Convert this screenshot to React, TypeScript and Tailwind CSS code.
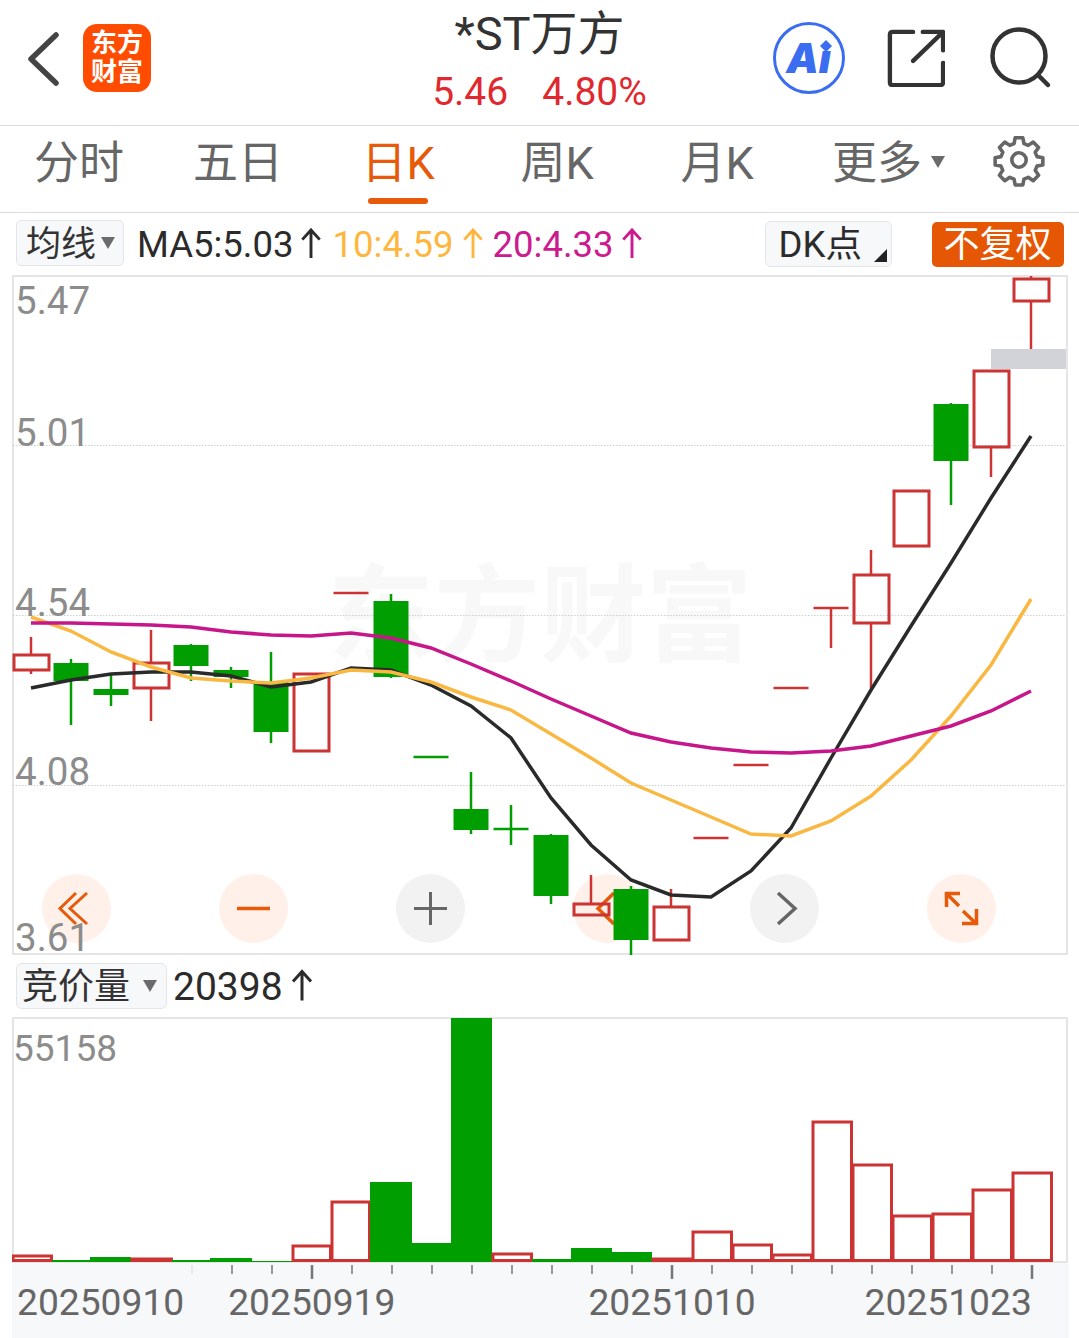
const RED = "#cc3333";
const GREEN = "#009e00";
const ORANGE = "#e65a0a";

type Candle = { x: number; c: "r" | "g"; top: number; bottom: number; hi?: number; lo?: number };

// page coordinates, read off the screenshot
const candles: Candle[] = [
  { x: 31, c: "r", top: 655, bottom: 670, hi: 637, lo: 674 },
  { x: 71, c: "g", top: 663, bottom: 681, hi: 659, lo: 725 },
  { x: 111, c: "g", top: 689, bottom: 695, hi: 675, lo: 706 },
  { x: 151, c: "r", top: 663, bottom: 688, hi: 630, lo: 721 },
  { x: 191, c: "g", top: 645, bottom: 666, hi: 644, lo: 681 },
  { x: 231, c: "g", top: 670, bottom: 677, hi: 667, lo: 688 },
  { x: 271, c: "g", top: 682, bottom: 732, hi: 652, lo: 743 },
  { x: 311, c: "r", top: 674, bottom: 751 },
  { x: 351, c: "r", top: 593, bottom: 593 },
  { x: 391, c: "g", top: 601, bottom: 677, hi: 594, lo: 678 },
  { x: 431, c: "g", top: 757, bottom: 757 },
  { x: 471, c: "g", top: 809, bottom: 830, hi: 772, lo: 834 },
  { x: 511, c: "g", top: 829, bottom: 829, hi: 805, lo: 845 },
  { x: 551, c: "g", top: 835, bottom: 896, hi: 834, lo: 904 },
  { x: 591, c: "r", top: 904, bottom: 915, hi: 875 },
  { x: 631, c: "g", top: 889, bottom: 940, hi: 886, lo: 955 },
  { x: 671, c: "r", top: 907, bottom: 940, hi: 889 },
  { x: 711, c: "r", top: 838, bottom: 838 },
  { x: 751, c: "r", top: 765, bottom: 765 },
  { x: 791, c: "r", top: 688, bottom: 688 },
  { x: 831, c: "r", top: 608, bottom: 608, lo: 648 },
  { x: 871, c: "r", top: 575, bottom: 623, hi: 550, lo: 688 },
  { x: 911, c: "r", top: 491, bottom: 546 },
  { x: 951, c: "g", top: 404, bottom: 461, hi: 403, lo: 505 },
  { x: 991, c: "r", top: 371, bottom: 447, lo: 477 },
  { x: 1031, c: "r", top: 279, bottom: 301, hi: 276, lo: 349 },
];

const ma5 = [688, 680, 674, 672, 672, 676, 687, 682, 668, 670, 685, 706, 738, 798, 845, 880, 895, 897, 871, 828, 758, 690, 626, 563, 498, 436];
const ma10 = [617, 631, 652, 667, 678, 681, 683, 678, 670, 672, 682, 697, 710, 734, 758, 783, 800, 817, 834, 836, 821, 796, 760, 716, 665, 599];
const ma20 = [623, 623, 624, 625, 627, 632, 635, 636, 633, 638, 648, 664, 681, 699, 716, 733, 742, 748, 752, 753, 751, 746, 736, 726, 711, 691];

const pts = (ys: number[]) => ys.map((y, i) => `${31 + i * 40},${y}`).join(" ");

const volumes: [number, number, "r" | "g", number][] = [
  [12, 52, "r", 1255], [52, 90, "g", 1260], [90, 131, "g", 1257], [131, 172, "r", 1258],
  [172, 210, "g", 1260], [210, 252, "g", 1258], [252, 292, "g", 1261], [292, 331, "r", 1245],
  [331, 370, "r", 1201], [370, 412, "g", 1182], [412, 451, "g", 1243], [451, 492, "g", 1018],
  [492, 532, "r", 1253], [532, 571, "g", 1259], [571, 612, "g", 1248], [612, 652, "g", 1252],
  [652, 692, "r", 1258], [692, 732, "r", 1231], [732, 772, "r", 1244], [772, 812, "r", 1254],
  [812, 852, "r", 1121], [852, 892, "r", 1164], [892, 932, "r", 1215], [932, 972, "r", 1213],
  [972, 1012, "r", 1189], [1012, 1052, "r", 1172],
];

const priceLabels: [string, string][] = [
  ["5.47", "top-[5px]"],
  ["5.01", "top-[137px]"],
  ["4.54", "top-[307px]"],
  ["4.08", "top-[476px]"],
  ["3.61", "top-[642px]"],
];

function UpArrow({ color, className }: { color: string; className: string }) {
  return (
    <svg viewBox="0 0 22 32" className={className} fill="none" stroke={color} strokeWidth="3">
      <path d="M11 31V2M2 12 11 2l9 10" />
    </svg>
  );
}

function Caret({ className }: { className: string }) {
  return <span className={`h-0 w-0 border-x-[7px] border-t-[12px] border-x-transparent border-t-[#6b6b6b] ${className}`} />;
}

function Header() {
  return (
    <div className="relative flex h-[126px] items-start border-b border-[#dcdcdc]">
      <svg viewBox="0 0 32 54" className="ml-[27px] mt-[32px] h-[54px] w-[32px]" fill="none" stroke="#444" strokeWidth="5.5" strokeLinecap="round" strokeLinejoin="round">
        <path d="M29 3 4 27l25 24" />
      </svg>
      <div className="ml-[24px] mt-[24px] flex h-[68px] w-[68px] flex-col items-center justify-center rounded-[14px] bg-[#ff4c00] text-[26px] leading-[29px] font-bold text-white">
        <span>东方</span>
        <span>财富</span>
      </div>
      <div className="absolute left-0 right-0 top-[6px] flex flex-col items-center">
        <span className="text-[47px] leading-[56px] text-[#333]">*ST万方</span>
        <span className="mt-[7px] flex gap-[34px] text-[39px] leading-[46px] text-[#e0282e]">
          <span>5.46</span>
          <span>4.80%</span>
        </span>
      </div>
      <div className="ml-auto flex items-start">
        <div className="relative mt-[22px] flex h-[72px] w-[72px] items-center justify-center rounded-full border-[3.5px] border-[#3b6df0]">
          <span className="mr-[1px] font-['Inter',sans-serif] text-[41px] leading-none font-black text-[#3b6df0] italic">Aı</span>
          <svg viewBox="0 0 14 14" className="absolute left-[44px] top-[15px] h-[12px] w-[12px]" fill="#3b6df0">
            <path d="M7 0 14 7 7 14 0 7Z" />
          </svg>
        </div>
        <svg viewBox="0 0 60 60" className="ml-[42px] mt-[29px] h-[58px] w-[58px]" fill="none" stroke="#333" strokeWidth="4.5" strokeLinecap="round" strokeLinejoin="round">
          <path d="M27 3H6Q3 3 3 6V55Q3 58 6 58H55Q58 58 58 55V35" />
          <path d="M27 33 57 4M37 3H58V22" />
        </svg>
        <svg viewBox="0 0 62 62" className="ml-[45px] mr-[27px] mt-[27px] h-[62px] w-[62px]" fill="none" stroke="#333" strokeWidth="4.5" strokeLinecap="round">
          <circle cx="29" cy="29" r="26.5" />
          <path d="M48 48 58 58" />
        </svg>
      </div>
    </div>
  );
}

function Tabs() {
  return (
    <div className="flex h-[87px] items-start border-b border-[#dcdcdc] text-[45px] leading-[75px] text-[#666]">
      <span className="w-[158px] text-center">分时</span>
      <span className="w-[160px] text-center">五日</span>
      <span className="relative w-[160px] text-center text-[#e65a0a]">
        日K
        <span className="absolute left-[50px] top-[72px] h-[6px] w-[60px] rounded-[3px] bg-[#e65a0a]" />
      </span>
      <span className="w-[158px] text-center">周K</span>
      <span className="ml-[1px] w-[160px] text-center">月K</span>
      <span className="flex w-[183px] items-center justify-center">
        更多
        <Caret className="ml-[9px] mt-[-4px]" />
      </span>
      <svg viewBox="0 0 24 24" className="ml-[12px] mt-[7px] h-[54px] w-[54px]" fill="none" stroke="#666" strokeWidth="1.6" strokeLinejoin="round">
        <path d="M10.3 2.5h3.4l.5 2.6 1.9.8 2.2-1.5 2.4 2.4-1.5 2.2.8 1.9 2.6.5v3.2l-2.6.5-.8 1.9 1.5 2.2-2.4 2.4-2.2-1.5-1.9.8-.5 2.6h-3.4l-.5-2.6-1.9-.8-2.2 1.5-2.4-2.4 1.5-2.2-.8-1.9-2.6-.5v-3.2l2.6-.5.8-1.9-1.5-2.2 2.4-2.4 2.2 1.5 1.9-.8z" transform="translate(0 -.4)" />
        <circle cx="12" cy="12" r="3.2" />
      </svg>
    </div>
  );
}

function MaRow() {
  return (
    <div className="flex h-[62px] items-start text-[36.5px] leading-[46px]">
      <div className="ml-[16px] mt-[7px] flex h-[46px] w-[108px] items-center rounded-[5px] border border-[#e3e5e8] bg-[#f7f8fa] pl-[9px] text-[35px] text-[#333]">
        <span className="mt-[3px]">均线</span>
        <Caret className="ml-[5px]" />
      </div>
      <span className="ml-[13px] mt-[9px] text-[#2b2b2b]">MA5:5.03</span>
      <UpArrow color="#2b2b2b" className="ml-[6px] mt-[15px] h-[31px] w-[22px]" />
      <span className="ml-[11px] mt-[9px] text-[#fdb73f]">10:4.59</span>
      <UpArrow color="#fdb73f" className="ml-[8px] mt-[15px] h-[31px] w-[22px]" />
      <span className="ml-[9px] mt-[9px] text-[#cc1a8f]">20:4.33</span>
      <UpArrow color="#cc1a8f" className="ml-[7px] mt-[15px] h-[31px] w-[22px]" />
      <div className="relative ml-[122px] mt-[8px] flex h-[46px] w-[127px] items-center rounded-[6px] border border-[#e3e5e8] bg-[#f7f8fa] pl-[13px] text-[#2b2b2b]">
        <span className="mt-[1px]">DK点</span>
        <span className="absolute bottom-[4px] right-[4px] h-0 w-0 border-b-[13px] border-l-[13px] border-b-[#222] border-l-transparent" />
      </div>
      <div className="ml-[40px] mt-[9px] flex h-[45px] w-[132px] items-center justify-center rounded-[5px] bg-[#e65705] text-[36px] text-white">不复权</div>
    </div>
  );
}

function RoundButton({ bg, children }: { bg: string; children: React.ReactNode }) {
  return (
    <div className={`h-[69px] w-[69px] rounded-full ${bg}`}>
      <svg viewBox="0 0 69 69" className="h-[69px] w-[69px]" fill="none">
        {children}
      </svg>
    </div>
  );
}

function PriceChart() {
  return (
    <div className="relative mx-[12px] h-[680px] w-[1056px] border-2 border-[#e5e5e5]">
      <div className="absolute left-[28px] top-[597px] flex gap-[108px]">
        <RoundButton bg="bg-[#fff1e9]">
          <path d="M34 19 18 34.5 34 50M45 19 28 34.5 45 50" stroke={ORANGE} strokeWidth="3" />
        </RoundButton>
        <RoundButton bg="bg-[#fff1e9]">
          <path d="M18 34.5H51" stroke={ORANGE} strokeWidth="3.5" />
        </RoundButton>
        <RoundButton bg="bg-[#f2f2f2]">
          <path d="M18 34.5H51M34.5 18V51" stroke="#666" strokeWidth="3" />
        </RoundButton>
        <RoundButton bg="bg-[#fff1e9]">
          <path d="M41 19 25 34.5 41 50" stroke={ORANGE} strokeWidth="3.5" />
        </RoundButton>
        <RoundButton bg="bg-[#f2f2f2]">
          <path d="M28 19 45 34.5 28 50" stroke="#666" strokeWidth="3.5" />
        </RoundButton>
        <RoundButton bg="bg-[#fff1e9]">
          <path d="M33 19.5H19.5V33M20 20 32 32M36 37 49.5 50M49.5 35V49.5H35" stroke={ORANGE} strokeWidth="3.5" />
        </RoundButton>
      </div>

      <div className="absolute left-[314px] top-[280px] text-[106px] leading-[120px] font-bold tracking-normal text-[#f8f8f8]">东方财富</div>

      <svg viewBox="12 275 1056 680" className="absolute -left-[2px] -top-[2px] h-[680px] w-[1056px]" fill="none">
        {[445, 615, 785].map((y) => (
          <line key={y} x1="13" x2="1066" y1={y + 0.5} y2={y + 0.5} stroke="#cfcfcf" strokeDasharray="1.5 1.5" />
        ))}
        <rect x="991" y="349" width="75" height="20" fill="#d1d3d8" />
        {candles.map((k) => {
          const color = k.c === "r" ? RED : GREEN;
          const flat = k.top === k.bottom;
          return (
            <g key={k.x} stroke={color}>
              {k.hi !== undefined && <line x1={k.x} x2={k.x} y1={k.hi} y2={k.top} strokeWidth="2.5" />}
              {k.lo !== undefined && <line x1={k.x} x2={k.x} y1={k.bottom} y2={k.lo} strokeWidth="2.5" />}
              {flat ? (
                <line x1={k.x - 17.5} x2={k.x + 17.5} y1={k.top} y2={k.top} strokeWidth="2.5" />
              ) : k.c === "r" ? (
                <rect x={k.x - 17} y={k.top} width="35" height={k.bottom - k.top} strokeWidth="3" />
              ) : (
                <rect x={k.x - 17.5} y={k.top} width="35" height={k.bottom - k.top} fill={color} stroke="none" />
              )}
            </g>
          );
        })}
        <polyline points={pts(ma5)} stroke="#2a2a2a" strokeWidth="3.5" />
        <polyline points={pts(ma10)} stroke="#f9b842" strokeWidth="3.5" />
        <polyline points={pts(ma20)} stroke="#c7158a" strokeWidth="3.5" />
      </svg>

      {priceLabels.map(([label, top]) => (
        <span key={label} className={`absolute left-[1px] text-[38.5px] leading-[38px] text-[#8c8c8c] ${top}`}>
          {label}
        </span>
      ))}
    </div>
  );
}

function VolRow() {
  return (
    <div className="flex h-[62px] items-start">
      <div className="ml-[16px] mt-[8px] flex h-[46px] w-[151px] items-center rounded-[6px] border border-[#e3e5e8] bg-[#f7f8fa] pl-[5px] text-[36px] text-[#333]">
        <span className="mt-[1px]">竞价量</span>
        <Caret className="ml-[13px]" />
      </div>
      <span className="ml-[6px] mt-[9px] text-[39px] leading-[46px] text-[#2b2b2b]">20398</span>
      <UpArrow color="#2b2b2b" className="ml-[8px] mt-[13px] h-[35px] w-[22px]" />
    </div>
  );
}

function VolumeChart() {
  return (
    <div className="relative mx-[12px] h-[246px] w-[1056px] border-2 border-[#e5e5e5]">
      <svg viewBox="12 1017 1056 246" className="absolute -left-[2px] -top-[2px] h-[246px] w-[1056px]" fill="none">
        {volumes.map(([l, r, c, top]) =>
          c === "g" ? (
            <rect key={l} x={l} y={top} width={r - l} height={1262 - top} fill={GREEN} />
          ) : (
            <rect key={l} x={l + 1} y={top + 1} width={r - l - 1.5} height={1260.5 - top - 1} stroke={RED} strokeWidth="3" />
          )
        )}
      </svg>
      <span className="absolute -left-[1px] top-[11px] text-[37px] leading-[38px] text-[#8c8c8c]">55158</span>
    </div>
  );
}

function Footer() {
  const ticks = Array.from({ length: 22 }, (_, i) => 192 + i * 40);
  return (
    <div className="relative mx-[12px] h-[75px] w-[1057px] bg-[#f7f8fa]">
      <svg viewBox="12 1263 1057 20" className="h-[20px] w-[1057px]" fill="none">
        {ticks.map((x) => {
          const big = x === 312 || x === 672 || x === 1032;
          return <line key={x} x1={x} x2={x} y1="1265" y2={big ? 1279 : 1274} stroke={x === 192 ? "#e6e6e6" : "#777"} strokeWidth={big ? 2.5 : 1.5} />;
        })}
      </svg>
      <div className="flex pl-[5px] text-[37.2px] leading-[38px] text-[#666]">
        <span>20250910</span>
        <span className="ml-[44px]">20250919</span>
        <span className="ml-[193px]">20251010</span>
        <span className="ml-[109px]">20251023</span>
      </div>
    </div>
  );
}

export default function App() {
  return (
    <div className="h-[1338px] w-[1079px] overflow-hidden bg-white font-['Roboto','Noto_Sans_CJK_SC',sans-serif]">
      <Header />
      <Tabs />
      <MaRow />
      <PriceChart />
      <VolRow />
      <VolumeChart />
      <Footer />
    </div>
  );
}
